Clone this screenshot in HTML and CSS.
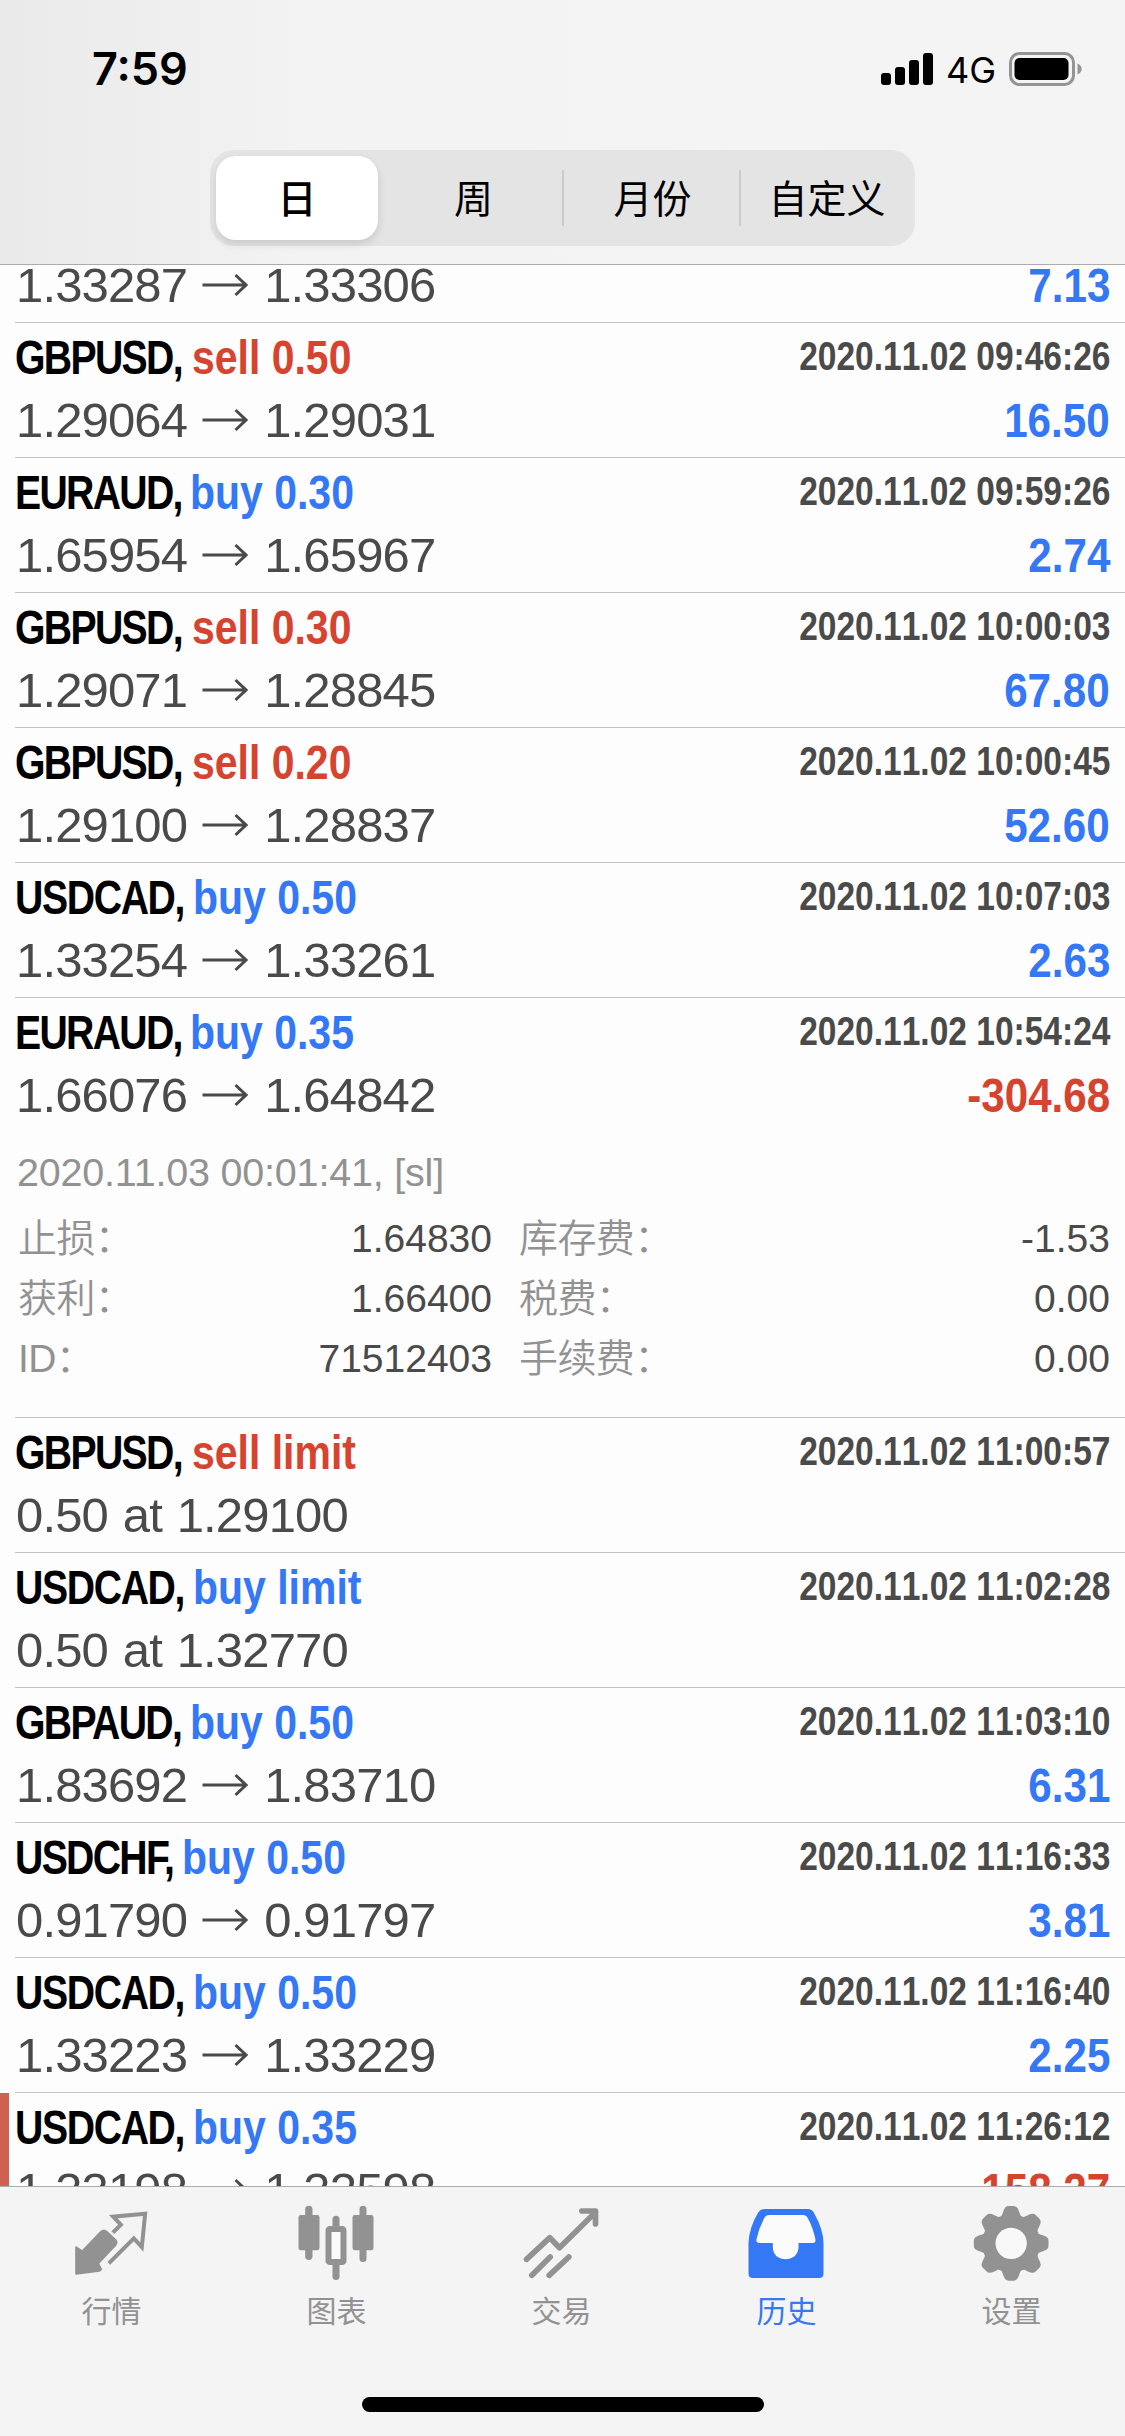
FILE: index.html
```html
<!DOCTYPE html>
<html lang="zh-CN">
<head>
<meta charset="utf-8">
<title>历史</title>
<link rel="stylesheet" href="styles.css">
</head>
<body>
<svg width="0" height="0" class="defs"><defs>
  <symbol id="arrow" viewBox="0 0 46 24"><path d="M0.500 12H43.500M33.500 2L44 12L33.500 22" fill="none" stroke="#4a4a4a" stroke-width="3"/></symbol>
</defs></svg>
<div class="screen">
  <header class="top">
    <div class="status">
      <span class="clock">7:59</span>
      <div class="indicators">
        <svg width="52" height="34" viewBox="0 0 52 34"><g fill="#000"><rect x="0" y="21" width="10" height="12" rx="3"/><rect x="14" y="15" width="10" height="18" rx="3"/><rect x="28" y="8" width="10" height="25" rx="3"/><rect x="42" y="1" width="10" height="32" rx="3"/></g></svg>
        <span class="network">4G</span>
        <svg width="74" height="34" viewBox="0 0 74 34"><rect x="1.500" y="1.500" width="63" height="31" rx="9" fill="none" stroke="#949495" stroke-width="3"/><rect x="5.500" y="6" width="54" height="22" rx="5" fill="#000"/><path d="M68.500 11.500C74 13.500 74 20.500 68.500 22.500Z" fill="#949495"/></svg>
      </div>
    </div>
    <nav class="segments">
      <span class="segment selected">日</span>
      <span class="segment">周</span>
      <span class="segment divided">月份</span>
      <span class="segment divided">自定义</span>
    </nav>
  </header>

  <main class="list">
    <section class="row clipped">
      <div class="line"><span class="price">1.33287<svg class="arrow"><use href="#arrow"/></svg>1.33306</span><span class="profit blue">7.13</span></div>
    </section>
    <section class="row">
      <div class="head"><span class="symbol">GBPUSD,</span><span class="side sell">sell 0.50</span><span class="time">2020.11.02 09:46:26</span></div>
      <div class="line"><span class="price">1.29064<svg class="arrow"><use href="#arrow"/></svg>1.29031</span><span class="profit blue">16.50</span></div>
    </section>
    <section class="row">
      <div class="head"><span class="symbol">EURAUD,</span><span class="side blue">buy 0.30</span><span class="time">2020.11.02 09:59:26</span></div>
      <div class="line"><span class="price">1.65954<svg class="arrow"><use href="#arrow"/></svg>1.65967</span><span class="profit blue">2.74</span></div>
    </section>
    <section class="row">
      <div class="head"><span class="symbol">GBPUSD,</span><span class="side sell">sell 0.30</span><span class="time">2020.11.02 10:00:03</span></div>
      <div class="line"><span class="price">1.29071<svg class="arrow"><use href="#arrow"/></svg>1.28845</span><span class="profit blue">67.80</span></div>
    </section>
    <section class="row">
      <div class="head"><span class="symbol">GBPUSD,</span><span class="side sell">sell 0.20</span><span class="time">2020.11.02 10:00:45</span></div>
      <div class="line"><span class="price">1.29100<svg class="arrow"><use href="#arrow"/></svg>1.28837</span><span class="profit blue">52.60</span></div>
    </section>
    <section class="row">
      <div class="head"><span class="symbol usdcad">USDCAD,</span><span class="side blue">buy 0.50</span><span class="time">2020.11.02 10:07:03</span></div>
      <div class="line"><span class="price">1.33254<svg class="arrow"><use href="#arrow"/></svg>1.33261</span><span class="profit blue">2.63</span></div>
    </section>
    <section class="row expanded">
      <div class="head"><span class="symbol">EURAUD,</span><span class="side blue">buy 0.35</span><span class="time">2020.11.02 10:54:24</span></div>
      <div class="line"><span class="price">1.66076<svg class="arrow"><use href="#arrow"/></svg>1.64842</span><span class="profit red">-304.68</span></div>
      <div class="closed">2020.11.03 00:01:41, [sl]</div>
      <dl class="details">
        <div class="pair"><dt>止损：</dt><dd>1.64830</dd></div>
        <div class="pair"><dt>库存费：</dt><dd>-1.53</dd></div>
        <div class="pair"><dt>获利：</dt><dd>1.66400</dd></div>
        <div class="pair"><dt>税费：</dt><dd>0.00</dd></div>
        <div class="pair"><dt>ID：</dt><dd>71512403</dd></div>
        <div class="pair"><dt>手续费：</dt><dd>0.00</dd></div>
      </dl>
    </section>
    <section class="row">
      <div class="head"><span class="symbol">GBPUSD,</span><span class="side sell">sell limit</span><span class="time">2020.11.02 11:00:57</span></div>
      <div class="line"><span class="price">0.50 at 1.29100</span></div>
    </section>
    <section class="row">
      <div class="head"><span class="symbol usdcad">USDCAD,</span><span class="side blue">buy limit</span><span class="time">2020.11.02 11:02:28</span></div>
      <div class="line"><span class="price">0.50 at 1.32770</span></div>
    </section>
    <section class="row">
      <div class="head"><span class="symbol">GBPAUD,</span><span class="side blue">buy 0.50</span><span class="time">2020.11.02 11:03:10</span></div>
      <div class="line"><span class="price">1.83692<svg class="arrow"><use href="#arrow"/></svg>1.83710</span><span class="profit blue">6.31</span></div>
    </section>
    <section class="row">
      <div class="head"><span class="symbol usdchf">USDCHF,</span><span class="side blue">buy 0.50</span><span class="time">2020.11.02 11:16:33</span></div>
      <div class="line"><span class="price">0.91790<svg class="arrow"><use href="#arrow"/></svg>0.91797</span><span class="profit blue">3.81</span></div>
    </section>
    <section class="row">
      <div class="head"><span class="symbol usdcad">USDCAD,</span><span class="side blue">buy 0.50</span><span class="time">2020.11.02 11:16:40</span></div>
      <div class="line"><span class="price">1.33223<svg class="arrow"><use href="#arrow"/></svg>1.33229</span><span class="profit blue">2.25</span></div>
    </section>
    <section class="row stopped">
      <div class="head"><span class="symbol usdcad">USDCAD,</span><span class="side blue">buy 0.35</span><span class="time">2020.11.02 11:26:12</span></div>
      <div class="line"><span class="price">1.33198<svg class="arrow"><use href="#arrow"/></svg>1.32598</span><span class="profit red">-158.27</span></div>
    </section>
  </main>

  <footer class="bottom">
    <nav class="tabs">
      <div class="tab">
        <svg class="icon" viewBox="-7.5 0 330 330"><path d="M50 172L68 184L124 126Q133 118 142 126L168 150Q174 157 168 165L116 220L125 238L120 242L50 251Z" fill="#929292" stroke="#929292" stroke-width="6" stroke-linejoin="round"/><path d="M160 128L184 104L161 80L257 71L247 171L223 145L148 220" fill="none" stroke="#929292" stroke-width="12"/></svg>
        <span class="label">行情</span>
      </div>
      <div class="tab">
        <svg class="icon" viewBox="-7.5 0 330 330"><g fill="#929292"><rect x="42" y="75" width="63" height="106" rx="7"/><rect x="62" y="47" width="22" height="163" rx="11"/><rect x="204" y="75" width="63" height="106" rx="7"/><rect x="225" y="47" width="21" height="169" rx="10.500"/><rect x="144" y="77" width="21" height="45" rx="10.500"/><rect x="144" y="210" width="21" height="60" rx="10.500"/></g><rect x="132" y="117" width="45" height="99" rx="4" fill="#fbfbfb" stroke="#929292" stroke-width="18"/></svg>
        <span class="label">图表</span>
      </div>
      <div class="tab">
        <svg class="icon" viewBox="-7.500 0 330 330"><path d="M51 208L121 143L150 173L258 67M217 63H258V102M67 256L122 201M119 256L178 201" fill="none" stroke="#929292" stroke-width="17" stroke-linecap="round" stroke-linejoin="round"/></svg>
        <span class="label">交易</span>
      </div>
      <div class="tab active">
        <svg class="icon" viewBox="7.5 0 330 330"><path d="M105 57H235Q246 57 252 66Q282 119 282 158V251Q282 264 269 264H70Q57 264 57 251V158Q59 112 87 66Q94 57 105 57Z" fill="#3478f6"/><path d="M119 75H220Q230 75 235 85Q250 112 258 149Q259 159 250 159H207V172C207 193 191 208 168 208S130 193 130 172V159H90Q79 159 81 148Q87 116 104 85Q109 75 119 75Z" fill="#fbfbfb"/></svg>
        <span class="label">历史</span>
      </div>
      <div class="tab">
        <svg class="icon" viewBox="682.5 0 330 330"><g fill="#929292"><circle cx="845" cy="160" r="87"/><g id="teeth"><path id="tooth" d="M808 88Q816 82 821 65Q826 48 837 48H853Q864 48 869 65Q874 82 882 88Z"/><use href="#tooth" transform="rotate(45 845 160)"/><use href="#tooth" transform="rotate(90 845 160)"/><use href="#tooth" transform="rotate(135 845 160)"/></g><use href="#teeth" transform="rotate(180 845 160)"/></g><circle cx="845" cy="160" r="47" fill="#f8f8f8"/></svg>
        <span class="label">设置</span>
      </div>
    </nav>
    <div class="home"></div>
  </footer>
</div>
</body>
</html>
```
FILE: styles.css
```css
* { box-sizing: border-box; }
body {
  margin: 0;
  background: #fdfdfd;
  font-family: "Liberation Sans", "Noto Sans CJK SC", sans-serif;
  color: #4a4a4a;
}
.defs { display: block; }
.screen {
  width: 1125px;
  height: 2436px;
  display: flex;
  flex-direction: column;
  overflow: hidden;
}

/* header */
.top {
  flex: 0 0 265px;
  border-bottom: 1px solid #acacae;
  background: linear-gradient(90deg, #eaeaea 0, #eeeeee 150px, #f3f3f4 300px, #f4f4f5 1125px);
}
.status {
  height: 150px;
  padding: 52px 42px 0 92px;
  display: flex;
  justify-content: space-between;
}
.clock {
  font: 600 45px/34px Inter, sans-serif;
  color: #000;
}
.indicators {
  display: flex;
  height: 34px;
  align-items: center;
  color: #000;
}
.network {
  font: 400 36px/34px Inter, sans-serif;
  width: 49px;
  margin: 2px 14px 0 13px;
  white-space: nowrap;
}
.segments {
  width: 705px;
  height: 96px;
  margin-left: 210px;
  padding: 6px;
  border-radius: 24px;
  background: #e4e4e5;
  display: grid;
  grid-template-columns: 162px 184px 177px 1fr;
}
.segment {
  display: flex;
  align-items: center;
  justify-content: center;
  font: 400 39px/50px "Noto Sans CJK SC", sans-serif;
  color: #000;
  padding-bottom: 5px;
}
.selected {
  background: #fff;
  border-radius: 20px;
  font-weight: 500;
  box-shadow: 0 4px 8px rgba(0, 0, 0, .12);
}
.segment:nth-child(2) { padding-left: 7px; }
.divided {
  padding-left: 4px;
  background: linear-gradient(#cbcbcd, #cbcbcd) 0 50% / 2px 56px no-repeat;
}
.divided:last-child { padding-left: 6px; }

/* history list */
.list {
  flex: 1 1 0;
  min-height: 0;
  overflow: hidden;
}
.row {
  position: relative;
  height: 135px;
  margin-left: 15px;
  padding: 6px 15px 0 0;
  border-top: 1px solid #c3c3c5;
}
.row.clipped {
  height: 57px;
  padding-top: 0;
  border-top: 0;
}
.row.clipped .line { height: 40px; line-height: 40px; }
.row.expanded { height: 420px; }
.stopped::before {
  content: "";
  position: absolute;
  left: -15px;
  top: 0;
  width: 9px;
  height: 135px;
  background: #cf6151;
}
.head, .line {
  display: flex;
  align-items: flex-start;
  white-space: nowrap;
}
.head {
  height: 56px;
  margin-bottom: 5px;
  font-weight: 700;
}
.symbol, .side {
  font-size: 49px;
  line-height: 56px;
  transform-origin: 0 0;
}
.symbol {
  flex: 0 0 175px;
  min-width: 0;
  width: 175px;
  color: #000;
  letter-spacing: -2.1px;
  transform: scaleX(.8);
}
.symbol.usdcad { flex-basis: 178px; letter-spacing: -1.7px; }
.symbol.usdchf { flex-basis: 167px; }
.side { transform: scaleX(.836); }
.time {
  margin-left: auto;
  font-size: 40px;
  line-height: 55px;
  font-kerning: none;
  transform: scaleX(.838);
  transform-origin: 100% 0;
}
.line { height: 60px; line-height: 60px; }
.price {
  padding-left: 1px;
  font-size: 49px;
  letter-spacing: -.85px;
  word-spacing: 2px;
}
.arrow {
  width: 46px;
  height: 24px;
  margin: 0 16px 0 15px;
  vertical-align: 5px;
}
.profit {
  margin-left: auto;
  font-size: 49px;
  font-weight: 700;
  transform: scaleX(.86);
  transform-origin: 100% 0;
}
.blue { color: #3478f6; }
.red { color: #d6432f; }
.sell { color: #d6432f; margin-left: 2px; }
.closed {
  margin-top: 17px;
  padding-left: 2px;
  font-size: 39.5px;
  line-height: 60px;
  letter-spacing: -.2px;
  color: #929292;
}
.details {
  margin: 7px 0 0;
  padding-left: 3px;
  display: grid;
  grid-template-columns: 474px 1fr;
  column-gap: 27px;
  grid-auto-rows: 60px;
  font-size: 39px;
  line-height: 60px;
}
.pair { display: flex; justify-content: space-between; }
.pair dt { color: #929292; font-weight: 350; letter-spacing: -.6px; }
.pair dd { margin: 0; font-size: 39px; }

/* tab bar */
.bottom {
  flex: 0 0 250px;
  border-top: 1px solid #acacae;
  background: #f4f4f4;
  padding-top: 3px;
}
.tabs {
  display: grid;
  grid-template-columns: repeat(5, 225px);
  height: 207px;
}
.tab {
  display: flex;
  flex-direction: column;
  align-items: center;
  padding-right: 2px;
  color: #929292;
}
.tab.active { color: #3478f6; }
.icon { width: 110px; height: 110px; }
.label {
  margin-top: -13px;
  font: 400 30px/44px "Noto Sans CJK SC", sans-serif;
}
.home {
  width: 402px;
  height: 15px;
  margin: 0 auto;
  border-radius: 8px;
  background: #000;
}
```
